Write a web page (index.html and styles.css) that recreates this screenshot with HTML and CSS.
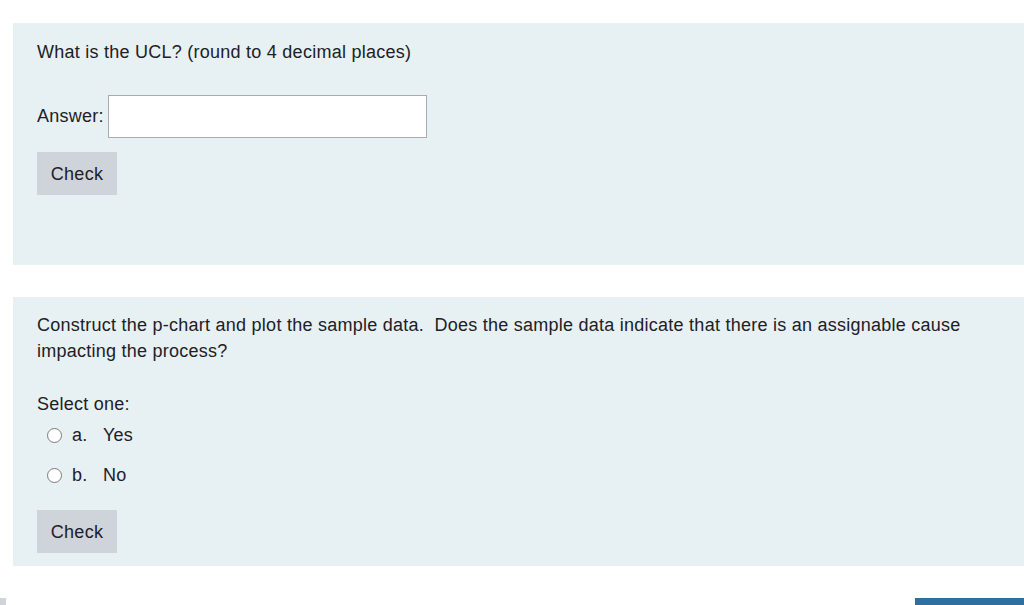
FILE: index.html
```html
<!DOCTYPE html>
<html>
<head>
<meta charset="utf-8">
<link rel="stylesheet" href="styles.css">
</head>
<body>
<div class="page">
  <section class="que que-first">
    <div class="qtext">What is the UCL? (round to 4 decimal places)</div>
    <div class="answer-row">
      <label class="answer-label">Answer:</label>
      <input class="answer-input" type="text">
    </div>
    <button class="check">Check</button>
  </section>
  <section class="que que-second">
    <div class="qtext2">Construct the p-chart and plot the sample data.&nbsp; Does the sample data indicate that there is an assignable cause impacting the process?</div>
    <div class="prompt">Select one:</div>
    <div class="options">
      <div class="option"><span class="radio"></span><span class="letter">a.</span><span class="opt-text">Yes</span></div>
      <div class="option"><span class="radio"></span><span class="letter">b.</span><span class="opt-text">No</span></div>
    </div>
    <button class="check check2">Check</button>
  </section>
  <div class="footer">
    <span class="gray-tab"></span>
    <span class="blue-bar"></span>
  </div>
</div>
</body>
</html>
```
FILE: styles.css
```css
html, body {
  margin: 0;
  padding: 0;
  background: #fff;
  overflow: hidden;
}
body {
  font-family: "Liberation Sans", Arial, sans-serif;
  font-size: 18px;
  letter-spacing: 0.25px;
  color: #1d2125;
}
.page {
  padding-top: 23px;
  width: 1024px;
}
.que {
  margin-left: 13px;
  background: #e7f0f3;
  box-sizing: border-box;
  padding-left: 24px;
}
.que-first {
  height: 242px;
  padding-top: 16px;
}
.qtext {
  line-height: 26px;
  height: 26px;
}
.answer-row {
  display: flex;
  align-items: center;
  margin-top: 30px;
  height: 43px;
}
.answer-label {
  width: 71px;
  flex: none;
}
.answer-input {
  width: 319px;
  height: 43px;
  box-sizing: border-box;
  border: 1px solid #a9acaf;
  background: #fff;
  margin: 0;
  padding: 0;
  font: inherit;
}
.check {
  display: block;
  width: 80px;
  height: 43px;
  border: none;
  background: #ced4da;
  color: #1d2125;
  font-family: "Liberation Sans", Arial, sans-serif;
  font-size: 18px;
  letter-spacing: 0.25px;
  padding: 2px 0 0 0;
  margin-top: 14px;
}
.que-second {
  margin-top: 32px;
  height: 269px;
  padding-top: 15px;
}
.qtext2 {
  line-height: 26px;
  width: 980px;
}
.prompt {
  margin-top: 27px;
  line-height: 26px;
}
.option {
  display: flex;
  align-items: center;
  height: 40px;
  margin-left: 10px;
}
.option:first-child {
  margin-top: -2px;
}
.radio {
  width: 15px;
  height: 15px;
  border: 1px solid #7b7b7b;
  border-radius: 50%;
  box-sizing: border-box;
  background: #fff;
  margin-right: 10px;
}
.letter {
  width: 31px;
}
.check2 {
  margin-top: 15px;
}
.footer {
  display: flex;
  justify-content: space-between;
  margin-top: 32px;
  height: 7px;
}
.gray-tab {
  width: 6px;
  height: 7px;
  background: #d0d4d9;
}
.blue-bar {
  width: 109px;
  height: 7px;
  background: #2f6f9f;
}
```
